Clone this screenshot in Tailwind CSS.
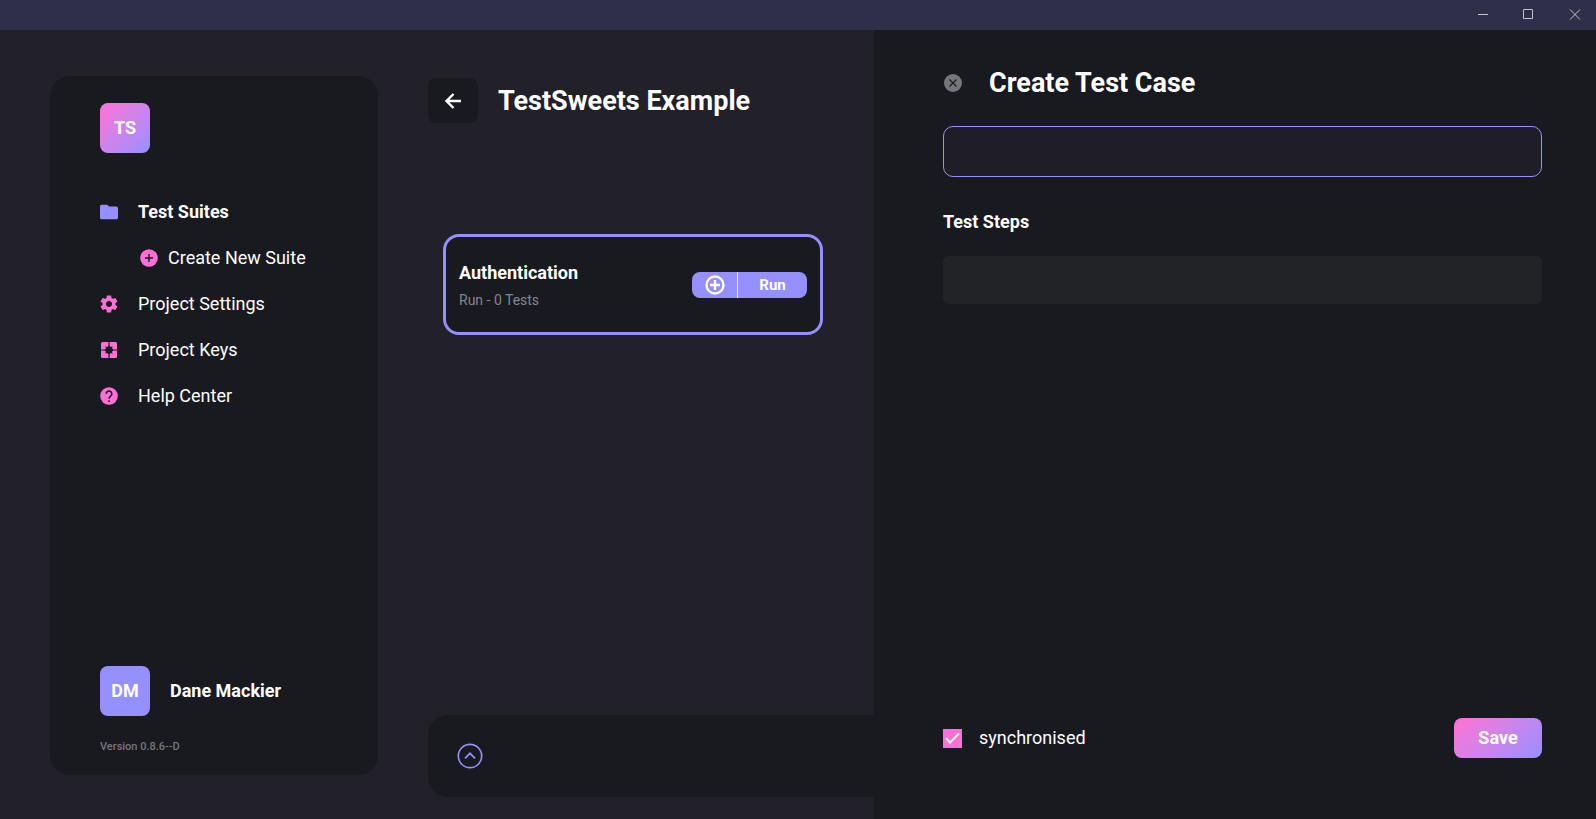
<!DOCTYPE html>
<html lang="en">
<head>
<meta charset="utf-8">
<meta name="viewport" content="width=device-width, initial-scale=1">
<title>TestSweets</title>
<script src="https://cdn.jsdelivr.net/npm/@tailwindcss/browser@4"></script>
</head>
<body class="flex min-h-screen flex-col bg-[#22212a] font-['Roboto',sans-serif] text-lg leading-6 text-white">
<header class="flex h-[30px] shrink-0 items-stretch justify-end gap-1 bg-[#302f4a] text-[#c3c3cb]">
  <button aria-label="Minimize" class="flex w-[42px] items-center justify-center"><svg class="size-3" viewBox="0 0 12 12" fill="none" stroke="currentColor"><path d="M1 5.500h10"/></svg></button>
  <button aria-label="Maximize" class="flex w-[42px] items-center justify-center"><svg class="size-3" viewBox="0 0 12 12" fill="none" stroke="currentColor"><path d="M.5 .5h9v9h-9z"/></svg></button>
  <button aria-label="Close window" class="flex w-[42px] items-center justify-center"><svg class="size-3" viewBox="0 0 12 12" fill="none" stroke="currentColor"><path d="M1 .5l10 10M11 .5l-10 10"/></svg></button>
</header>

<div class="flex flex-1">
  <aside class="mt-[46px] mb-11 ml-[50px] flex w-[328px] shrink-0 flex-col rounded-[20px] bg-[#191920] px-[50px] pt-[27px] pb-[19px]">
    <div class="flex size-[50px] items-center justify-center rounded-lg bg-linear-135 from-[#ff70d6] to-[#958fff] font-bold">TS</div>
    <nav class="mt-[47px] flex flex-col gap-[22px]">
      <a href="#suites" class="flex items-center gap-5 font-bold"><svg class="size-[18px] text-[#958fff]" viewBox="2 3 20 18" fill="currentColor"><path d="M10 4H4c-1.100 0-2 .9-2 2v12c0 1.100.9 2 2 2h16c1.100 0 2-.9 2-2V8c0-1.100-.9-2-2-2h-8z"/></svg>Test Suites</a>
      <a href="#new-suite" class="ml-10 flex items-center gap-2.5"><svg class="size-[18px] text-[#ff70d6]" viewBox="0 0 18 18"><circle cx="9" cy="9" r="8.800" fill="currentColor"/><path d="M9 5v8M5 9h8" stroke="#191920" stroke-width="1.400"/></svg>Create New Suite</a>
      <a href="#settings" class="flex items-center gap-5"><svg class="size-[18px] text-[#ff70d6]" viewBox="1.500 1.500 21 21" fill="currentColor"><path d="M19.430 12.980c.04-.32.07-.64.07-.98s-.03-.66-.07-.98l2.110-1.650c.19-.15.24-.42.12-.64l-2-3.460c-.12-.22-.39-.3-.61-.22l-2.490 1c-.52-.4-1.080-.73-1.690-.98l-.38-2.650C14.460 2.180 14.250 2 14 2h-4c-.25 0-.46.18-.49.42l-.38 2.650c-.61.25-1.170.59-1.690.98l-2.490-1c-.23-.09-.49 0-.61.22l-2 3.460c-.13.22-.07.49.12.64l2.110 1.650c-.04.32-.07.65-.07.98s.03.66.07.98l-2.110 1.650c-.19.15-.24.42-.12.64l2 3.460c.12.22.39.3.61.22l2.490-1c.52.4 1.080.73 1.690.98l.38 2.650c.03.24.24.42.49.42h4c.25 0 .46-.18.49-.42l.38-2.650c.61-.25 1.170-.59 1.690-.98l2.490 1c.23.09.49 0 .61-.22l2-3.460c.12-.22.07-.49-.12-.64l-2.110-1.650zM12 15.500c-1.930 0-3.500-1.570-3.500-3.500s1.570-3.500 3.500-3.500 3.500 1.570 3.500 3.500-1.570 3.500-3.500 3.500z"/></svg>Project Settings</a>
      <a href="#keys" class="flex items-center gap-5"><svg class="size-[18px] text-[#ff70d6]" viewBox="0 0 18 18" fill="currentColor"><path d="M2.500 1h5.900v3.700L7.200 6 5.300 5.300 6 7.200 4.700 8.400H1V2.500A1.500 1.500 0 0 1 2.500 1zM9.600 1h5.900A1.500 1.500 0 0 1 17 2.500v5.900h-3.700L12 7.200l.7-1.900-1.900.7L9.600 4.700zM1 9.600h3.700L6 10.800l-.7 1.900 1.900-.7 1.200 1.300V17H2.500A1.500 1.500 0 0 1 1 15.500zM13.300 9.600H17v5.900a1.500 1.500 0 0 1-1.500 1.500H9.600v-3.700l1.200-1.300 1.900.7-.7-1.900z"/></svg>Project Keys</a>
      <a href="#help" class="flex items-center gap-5"><svg class="size-[18px] text-[#ff70d6]" viewBox="0 0 18 18"><circle cx="9" cy="9" r="8.800" fill="currentColor"/><path d="M6.200 6.800a2.800 2.800 0 1 1 4.800 2C10 9.800 9 10.200 9 11.800M9 13.300v1.600" fill="none" stroke="#191920" stroke-width="1.500"/></svg>Help Center</a>
    </nav>
    <div class="mt-auto flex items-center gap-5 font-bold">
      <div class="flex size-[50px] items-center justify-center rounded-lg bg-[#958fff]">DM</div>
      <span>Dane Mackier</span>
    </div>
    <p class="mt-[22px] text-[11px] leading-[18px] font-medium text-[#77777b]">Version 0.8.6--D</p>
  </aside>

  <main class="flex min-w-0 flex-446 flex-col pt-12 pb-[22px] pl-[50px]">
    <div class="flex items-center gap-5">
      <button aria-label="Back" class="flex h-[45px] w-[50px] shrink-0 items-center justify-center rounded-lg bg-[#191920]"><svg class="size-5" viewBox="0 0 20 20" fill="none" stroke="currentColor" stroke-width="2.400"><path d="M18 10H3.500M10.500 3l-7 7 7 7"/></svg></button>
      <h1 class="text-[27px] leading-8 font-bold">TestSweets Example</h1>
    </div>
    <section class="mt-[111px] mr-[51px] ml-[15px] flex items-center justify-between rounded-2xl border-3 border-[#958fff] bg-[#191920] px-[13px] py-[22px]">
      <div>
        <h2 class="font-bold leading-7">Authentication</h2>
        <p class="mt-[3px] text-sm leading-5 text-[#858590]">Run - 0 Tests</p>
      </div>
      <div class="flex h-[26px] overflow-hidden rounded-lg bg-[#958fff]">
        <button aria-label="Add test" class="flex w-[45px] items-center justify-center"><svg class="size-5" viewBox="0 0 20 20" fill="none" stroke="currentColor" stroke-width="2.400"><circle cx="10" cy="10" r="8.500"/><path d="M10 5v10M5 10h10"/></svg></button>
        <button class="w-[70px] border-l border-white/80 text-[15px] font-bold">Run</button>
      </div>
    </section>
    <div class="mt-auto flex h-[82px] items-center rounded-l-[20px] bg-[#191920] pl-[29px]">
      <button aria-label="Expand panel" class="text-[#958fff]"><svg class="size-[26px]" viewBox="0 0 26 26" fill="none" stroke="currentColor" stroke-width="1.700"><circle cx="13" cy="13" r="11.700"/><path d="M8 15.300l5-5 5 5"/></svg></button>
    </div>
  </main>

  <form class="flex min-w-0 flex-599 flex-col bg-[#191920] pt-[37px] pr-[54px] pb-[61px] pl-[69px]">
    <div class="flex items-center gap-[27px]">
      <button type="button" aria-label="Close" class="ml-px text-[#77777a]"><svg class="size-[18px]" viewBox="0 0 18 18"><circle cx="9" cy="9" r="9" fill="currentColor"/><path d="M5.500 5.500l7 7M12.500 5.500l-7 7" stroke="#191920" stroke-width="1.200"/></svg></button>
      <h2 class="text-[27px] leading-8 font-bold">Create Test Case</h2>
    </div>
    <input type="text" aria-label="Test case name" class="mt-[27px] h-[51px] w-full rounded-[10px] border border-[#958fff] bg-[#1f1e27] px-4 outline-none">
    <h3 class="mt-[33px] font-bold">Test Steps</h3>
    <div class="mt-[22px] h-12 rounded-[5px] bg-[#222326]"></div>
    <div class="mt-auto flex items-center justify-between">
      <label class="flex items-center gap-[17px]">
        <span class="grid size-[19px]">
          <input type="checkbox" checked class="peer col-start-1 row-start-1 appearance-none border border-[#ff70d6] checked:bg-[#ff70d6]">
          <svg class="pointer-events-none invisible col-start-1 row-start-1 size-[19px] peer-checked:visible" viewBox="0 0 19 19" fill="none" stroke="currentColor" stroke-width="2"><path d="M3 9l4 4.500 9-9"/></svg>
        </span>
        synchronised
      </label>
      <button type="submit" class="h-10 w-[88px] rounded-lg bg-linear-135 from-[#ff70d6] to-[#958fff] font-bold">Save</button>
    </div>
  </form>
</div>
</body>
</html>
